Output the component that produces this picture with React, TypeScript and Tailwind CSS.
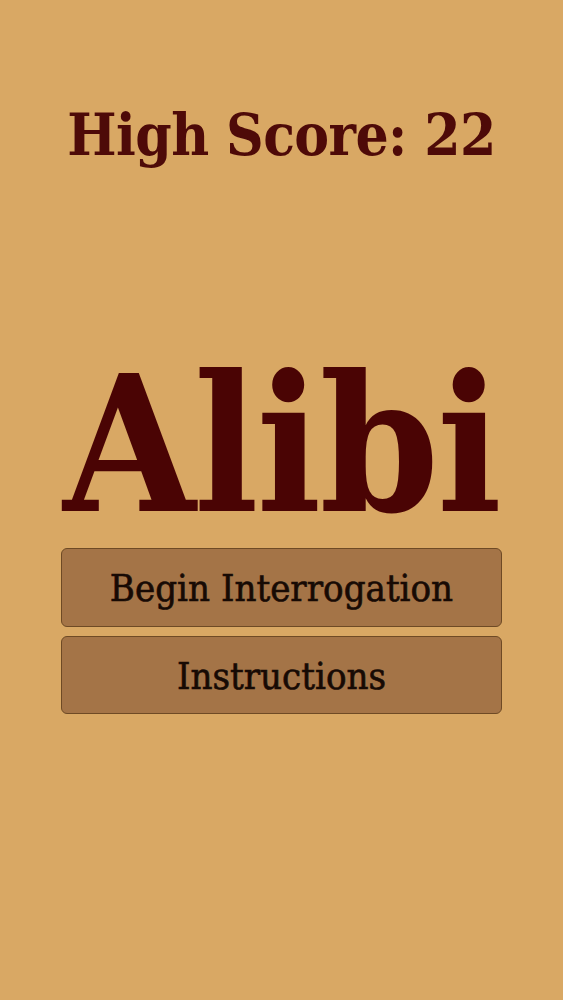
import React from "react";

export default function App() {
  return (
    <div className="w-[563px] h-[1000px] bg-[#d9a864] flex flex-col items-center" style={{ fontFamily: '"DejaVu Serif Condensed", "DejaVu Serif", "Liberation Serif", serif' }}>
      <div className="mt-[97px] h-[76px] flex items-center text-[#4e0a08] text-[58px] leading-none font-bold tracking-[-0.6px]">High Score: 22</div>
      <div className="mt-[177px] text-[#4a0404] text-[190px] leading-none font-bold tracking-[-2px]">Alibi</div>
      <div className="mt-[8px] w-[441px] flex flex-col gap-[9px]">
        <button className="h-[79px] pt-[2px] rounded-[6px] border border-[#6e4a25] bg-[#a47447] text-[#170a04] text-[38px] [-webkit-text-stroke:0.6px_#170a04]">Begin Interrogation</button>
        <button className="h-[78px] pt-[2px] rounded-[6px] border border-[#6e4a25] bg-[#a47447] text-[#170a04] text-[38px] [-webkit-text-stroke:0.6px_#170a04]">Instructions</button>
      </div>
    </div>
  );
}
